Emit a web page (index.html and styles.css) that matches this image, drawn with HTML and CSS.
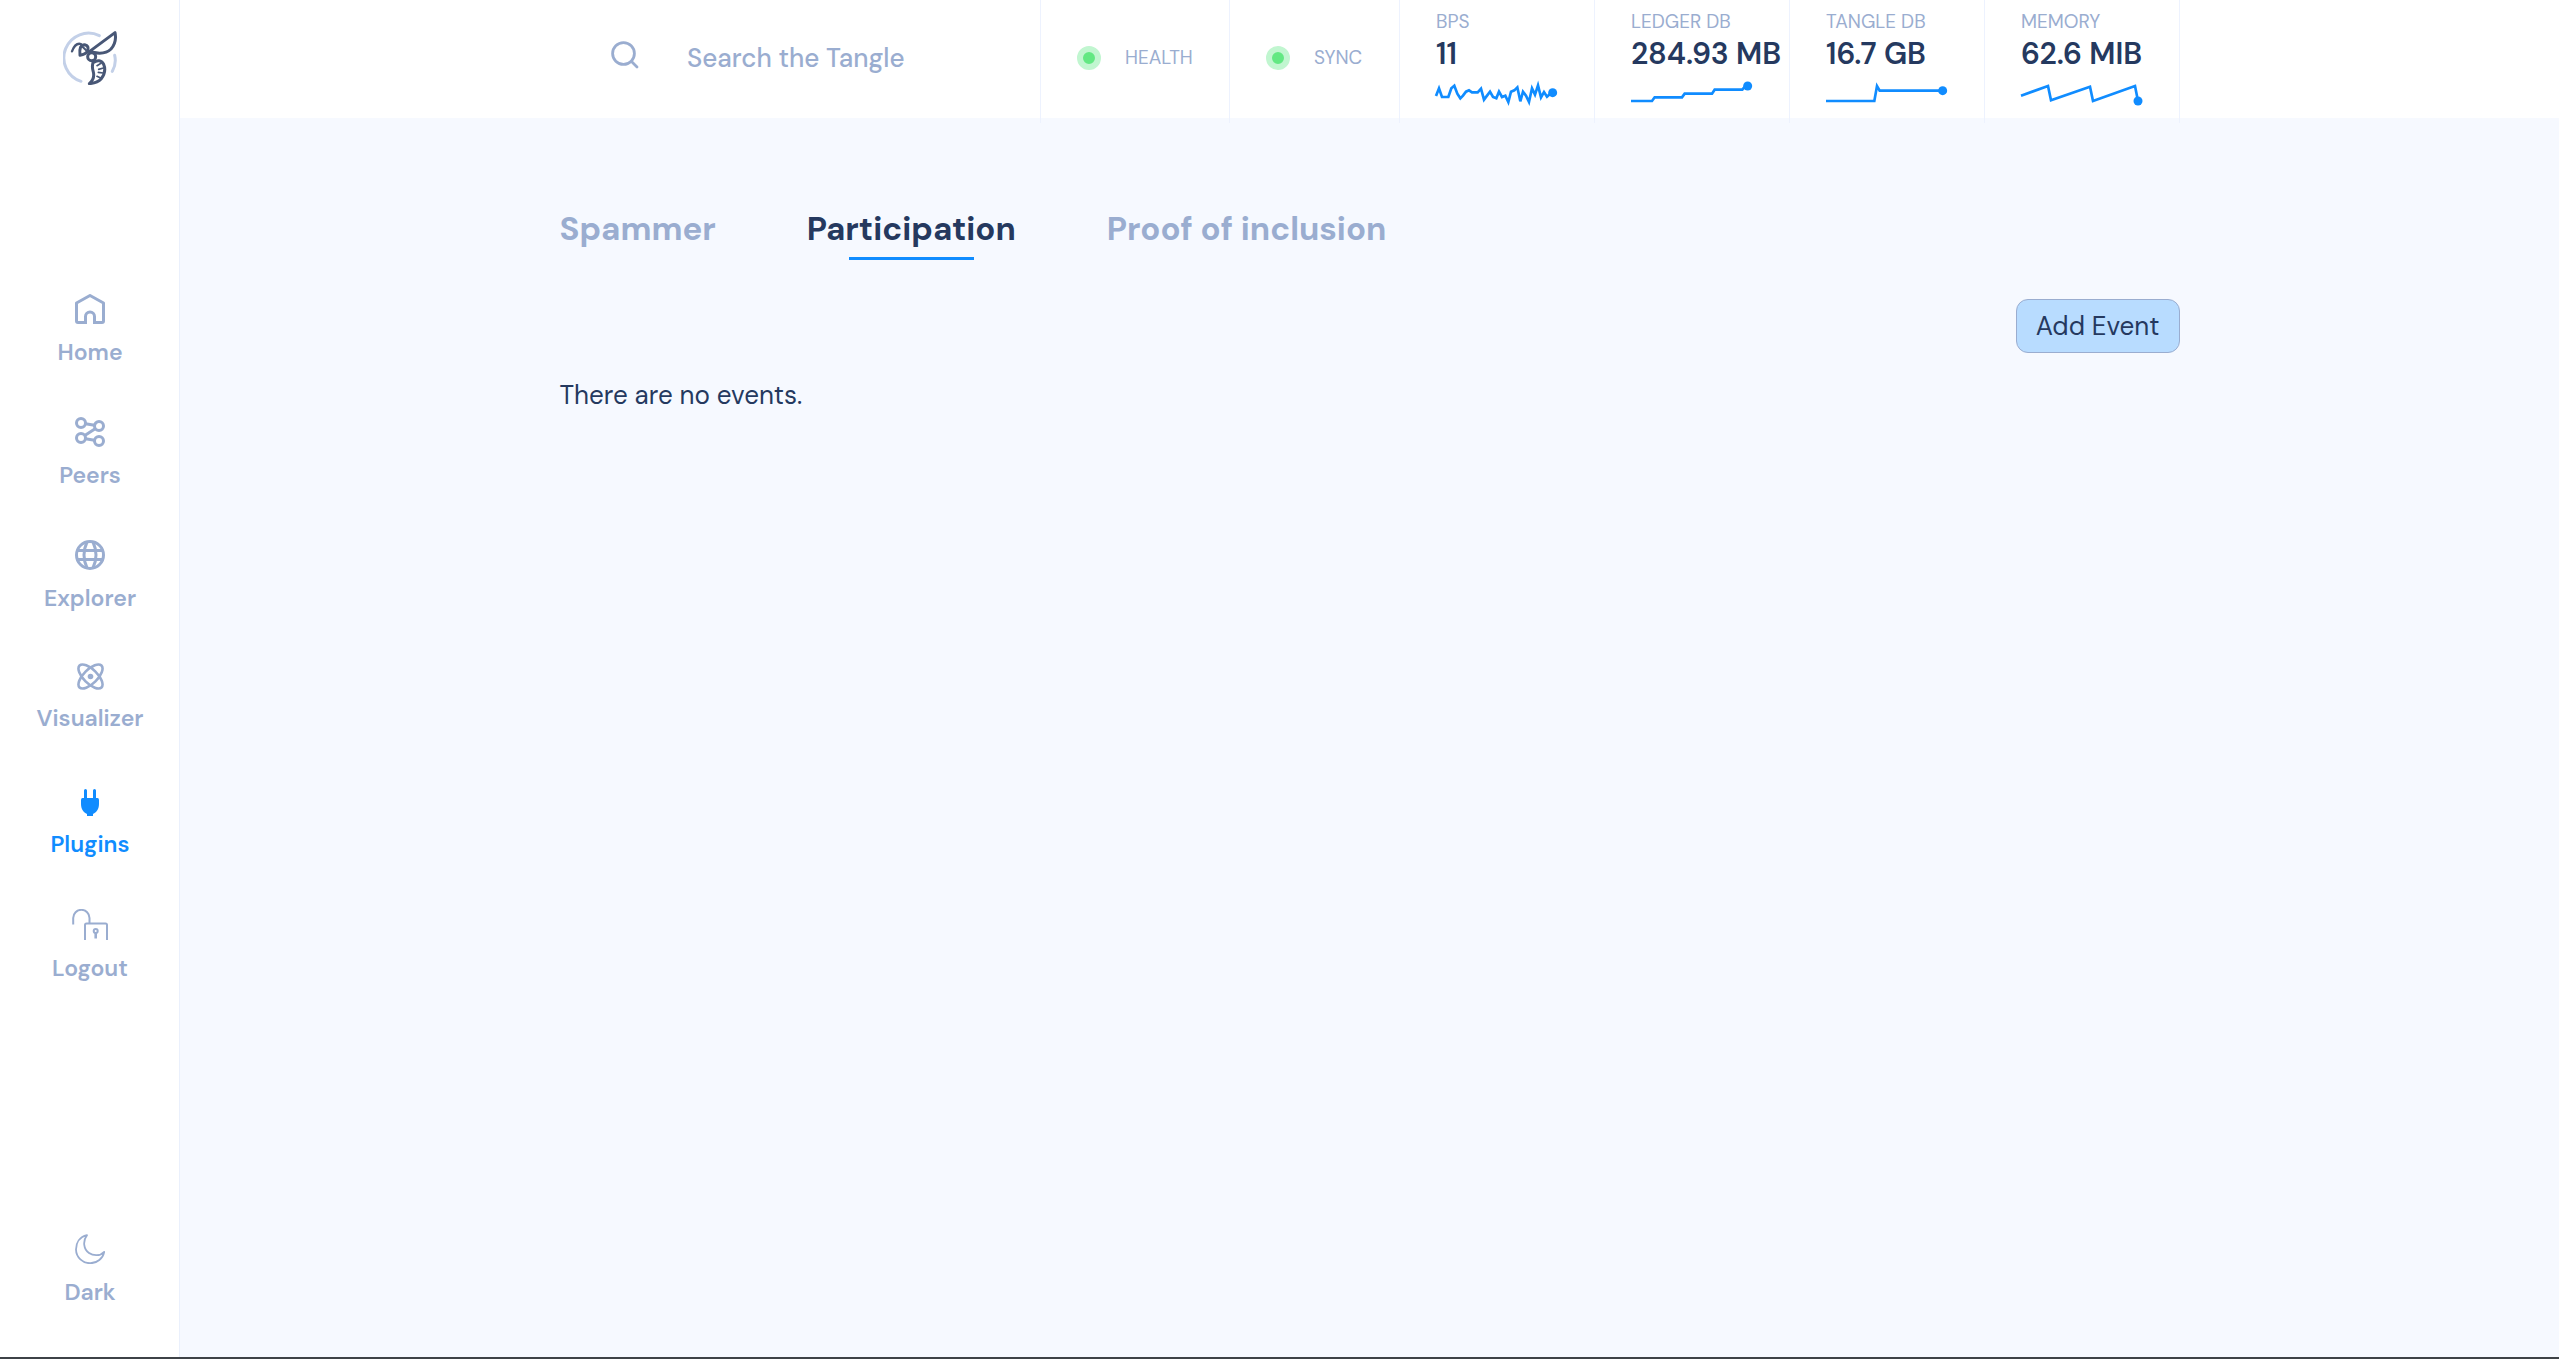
FILE: index.html
```html
<!DOCTYPE html>
<html lang="en">
<head>
<meta charset="utf-8">
<title>Node Dashboard</title>
<link rel="stylesheet" href="styles.css">
</head>
<body>
<div class="app">
  <aside class="sidebar">
    <a class="logo" href="#" aria-label="Dashboard">
      <svg width="54" height="54" viewBox="189 93 162 162" fill="none" stroke-linecap="round" stroke-linejoin="round">
        <g stroke="#c3d0e8" stroke-width="9">
          <path d="M298 107A74 74 0 1 0 243 244"/>
          <path d="M344 166Q350 191 337 214"/>
        </g>
        <g stroke="#485776" stroke-width="9">
          <path d="M268 155L345 98Q351 126 333 147Q315 165 278 157"/>
          <path d="M240 166Q236 134 254 134Q268 137 263 153Q257 163 240 166Z"/>
          <circle cx="275" cy="170" r="12"/>
          <path d="M279 188Q300 174 311 193Q320 214 304 236Q292 249 268 251Q285 237 280 216Q275 200 279 188Z"/>
          <path d="M216 154Q226 127 243 132" stroke-width="7"/>
          <path d="M246 139L263 155" stroke-width="6"/>
          <path d="M303 190L291 197M310 204L296 208M309 219L295 217M302 234L291 229" stroke-width="5"/>
        </g>
      </svg>
    </a>
    <nav class="nav">
      <a class="nav-item" href="#">
        <svg width="30" height="30" viewBox="0 0 30 30" fill="none" stroke="currentColor" stroke-width="3" stroke-linejoin="round"><path d="M10.500 28.500H3Q1.500 28.500 1.500 27V9L15 1.500L28.500 9V27Q28.500 28.500 27 28.500H19.500V22.500A4.500 4.500 0 0 0 10.500 22.500V30"/><path d="M19.500 28V30"/></svg>
        <span>Home</span>
      </a>
      <a class="nav-item" href="#">
        <svg width="30" height="30" viewBox="0 0 30 30" fill="none" stroke="currentColor" stroke-width="3"><circle cx="6" cy="6" r="4.500"/><circle cx="24" cy="9" r="4.500"/><circle cx="6" cy="21" r="4.500"/><circle cx="24" cy="24" r="4.500"/><path d="M10.500 6.800L19.500 8.200M20.500 11.500L9.800 18.500M10.500 21.800L19.500 23.200"/></svg>
        <span>Peers</span>
      </a>
      <a class="nav-item" href="#">
        <svg width="30" height="30" viewBox="0 0 30 30" fill="none" stroke="currentColor" stroke-width="3"><circle cx="15" cy="15" r="13.500"/><path d="M3 10.500H27M3 19.500H27M12 2Q6 15 12 28M18 2Q24 15 18 28"/></svg>
        <span>Explorer</span>
      </a>
      <a class="nav-item" href="#">
        <svg width="27" height="27" viewBox="0 0 27 27" fill="none" stroke="currentColor" stroke-width="2.600"><ellipse cx="13.500" cy="13.500" rx="15.500" ry="7" transform="rotate(45 13.500 13.500)"/><ellipse cx="13.500" cy="13.500" rx="15.500" ry="7" transform="rotate(-45 13.500 13.500)"/><circle cx="13.500" cy="13.500" r="2.800" fill="currentColor" stroke="none"/></svg>
        <span>Visualizer</span>
      </a>
      <a class="nav-item active" href="#">
        <svg width="30" height="33" viewBox="0 0 30 33" fill="currentColor"><path d="M9 15V7.500Q9 6 10.500 6Q12 6 12 7.500V15H18V7.500Q18 6 19.500 6Q21 6 21 7.500V15H22.500Q24 15 24 17V21C24 26 21.500 29.500 18 31V33H12V31C8.500 29.500 6 26 6 21V17Q6 15 7.500 15Z"/></svg>
        <span>Plugins</span>
      </a>
      <a class="nav-item" href="#">
        <svg width="36" height="31" viewBox="0 0 36 31" fill="none" stroke="currentColor" stroke-width="2"><path d="M1.200 15.500V9A8 8 0 0 1 17.500 9V14M13 31V16Q13 14.500 14.500 14.500H33.500Q35 14.500 35 16V31"/><circle cx="23.700" cy="22" r="2"/><path d="M23.700 24V29.500" stroke-width="2.600"/></svg>
        <span>Logout</span>
      </a>
    </nav>
    <button class="nav-item theme" type="button">
      <svg width="30" height="30" viewBox="0 0 30 30" fill="none" stroke="currentColor" stroke-width="1.800" stroke-linejoin="round"><path d="M12 1.200C4.500 3 1 9 1 15.500A14 14 0 0 0 15.500 29.200C22 29.200 28 24.500 29.200 17.800C25 22.500 18 21.800 14 19C8.500 15 7.500 7 12 1.200Z"/></svg>
      <span>Dark</span>
    </button>
  </aside>

  <div class="page">
    <header class="header">
      <div class="header-inner">
        <label class="search">
          <svg width="28" height="28" viewBox="0 0 28 28" fill="none" stroke="currentColor" stroke-width="2.800" stroke-linecap="round"><circle cx="12.500" cy="12.500" r="10.900"/><path d="M20.500 20.500L26 26"/></svg>
          <input type="text" placeholder="Search the Tangle" aria-label="Search the Tangle">
        </label>
        <div class="status health"><i class="dot"></i><span>HEALTH</span></div>
        <div class="status sync"><i class="dot"></i><span>SYNC</span></div>
        <div class="metric">
          <span class="metric-label">BPS</span>
          <strong class="metric-value">11</strong>
          <svg class="spark" width="124" height="26" viewBox="138 240 372 78"><polyline points="138,288 147,265 156,291 175,291 184,265 193,257 202,281 211,295 219,287 228,275 237,271 246,277 263,277 273,266 282,299 300,275 309,291 319,295 327,275 336,291 346,287 355,306 363,275 373,271 382,262 391,304 399,275 408,287 417,306 426,265 435,284 444,256 453,292 462,276 471,290 480,282 489,278"/><circle cx="488" cy="278" r="13.500"/></svg>
        </div>
        <div class="metric">
          <span class="metric-label">LEDGER DB</span>
          <strong class="metric-value">284.93 MB</strong>
          <svg class="spark" width="124" height="26" viewBox="723 240 372 78"><polyline points="723,303 786,303 794,292 876,292 884,281 966,281 974,269 1057,269 1066,258 1073,258"/><circle cx="1073" cy="258" r="13.500"/></svg>
        </div>
        <div class="metric">
          <span class="metric-label">TANGLE DB</span>
          <strong class="metric-value">16.7 GB</strong>
          <svg class="spark" width="124" height="26" viewBox="138 240 372 78"><polyline points="138,303 283,303 291,258 299,272 488,272"/><circle cx="488" cy="272" r="13.500"/></svg>
        </div>
        <div class="metric">
          <span class="metric-label">MEMORY</span>
          <strong class="metric-value">62.6 MIB</strong>
          <svg class="spark" width="124" height="26" viewBox="723 240 372 78"><polyline points="723,287 804,258 813,301 930,260 939,303 1065,258 1074,303"/><circle cx="1074" cy="303" r="13.500"/></svg>
        </div>
      </div>
    </header>

    <main class="content">
      <div class="tabs" role="tablist">
        <button class="tab" type="button" role="tab" aria-selected="false">Spammer</button>
        <button class="tab selected" type="button" role="tab" aria-selected="true">Participation</button>
        <button class="tab" type="button" role="tab" aria-selected="false">Proof of inclusion</button>
      </div>
      <div class="actions"><button class="add" type="button">Add Event</button></div>
      <p class="empty">There are no events.</p>
    </main>
  </div>
</div>
</body>
</html>
```
FILE: styles.css
```css
* { box-sizing: border-box; }

body {
  margin: 0;
  background: #f6f9ff;
  color: #25395f;
  font-family: "DM Sans", Inter, sans-serif;
  font-size: 26px;
  line-height: 36px;
}

button, input { font: inherit; color: inherit; border: 0; background: none; padding: 0; }
a { color: inherit; text-decoration: none; }
svg { display: block; flex: none; }

.app { display: flex; min-height: 100vh; border-bottom: 2px solid #3e4247; }

.sidebar {
  flex: none;
  display: flex;
  flex-direction: column;
  align-items: center;
  width: 180px;
  padding: 31px 0 47px;
  background: #fff;
  box-shadow: inset -1px 0 #eaf0fc;
}
.nav { display: flex; flex-direction: column; align-items: center; gap: 47px; margin-top: 209px; }
.nav-item {
  display: flex;
  flex-direction: column;
  align-items: center;
  gap: 11px;
  color: #9aadd0;
  font-size: 23px;
  font-weight: 600;
  line-height: 35px;
}
.nav-item.active { color: #108cff; }
.theme { margin-top: auto; }

.page { flex: 1; min-width: 0; }

.header { height: 118px; background: #fff; }
.header-inner { display: flex; height: 123px; max-width: 1621px; margin: 0 auto; }
.header-inner > * { border-right: 1px solid #edf2fe; }
.search { flex: 1; display: flex; align-items: center; gap: 48px; padding: 0 24px 13px 52px; color: #9aadd0; }
.search input { flex: 1; min-width: 0; height: 44px; margin-top: 6px; outline: 0; font-weight: 500; }
.search input::placeholder { color: #9aadd0; opacity: 1; }

.status { display: flex; align-items: center; gap: 24px; padding: 0 0 7px 36px; color: #9aadd0; font-size: 19px; }
.health { width: 189px; }
.sync { width: 170px; }
.dot { width: 24px; height: 24px; border: 6px solid #c1f6d0; border-radius: 50%; background: #63e883; }

.metric { display: flex; flex-direction: column; width: 195px; padding: 10px 0 0 36px; white-space: nowrap; }
.metric-label { color: #9aadd0; font-size: 19px; line-height: 24px; }
.metric-value { font-size: 30px; font-weight: 600; line-height: 40px; }
.spark { margin-top: 6px; overflow: visible; fill: #108cff; }
.spark polyline { fill: none; stroke: #108cff; stroke-width: 8; }

.content { max-width: 1620px; margin: 0 auto; padding: 91px 0 40px; }
.tabs { display: flex; gap: 91px; }
.tab { position: relative; padding-bottom: 11px; color: #9aadd0; font-size: 33px; font-weight: 700; line-height: 40px; }
.tab.selected { color: #25395f; }
.tab.selected::after { content: ""; position: absolute; left: 20%; right: 20%; bottom: 0; height: 3px; background: #108cff; }
.actions { display: flex; justify-content: flex-end; margin-top: 39px; }
.add { height: 54px; padding: 0 19px; border: 1px solid #9aadd0; border-radius: 12px; background: #b8dcff; }
.empty { margin: 24px 0 0; }
```
